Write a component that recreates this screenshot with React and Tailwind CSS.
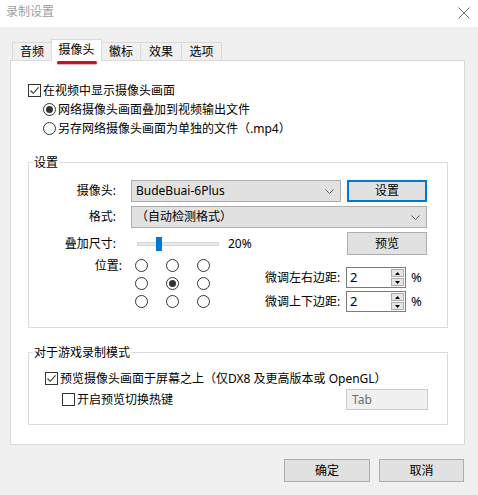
import { useState } from "react";

const font = { fontFamily: '"Noto Sans", "Noto Sans CJK SC", sans-serif' };

const Check = ({ checked }) => (
  <span className="w-[13px] h-[13px] shrink-0 border border-[#333333] bg-white flex items-center justify-center">
    {checked && (
      <svg width="11" height="11" viewBox="0 0 11 11">
        <path d="M1.5 5.5 L4.2 8.3 L9.6 2.4" stroke="#333333" strokeWidth="1.1" fill="none" />
      </svg>
    )}
  </span>
);

const Radio = ({ on }) => (
  <span className="w-[13px] h-[13px] shrink-0 rounded-full border border-[#333333] bg-white flex items-center justify-center">
    {on && <span className="w-[7px] h-[7px] rounded-full bg-[#333333]" />}
  </span>
);

const Chevron = () => (
  <svg width="9" height="5" viewBox="0 0 9 5">
    <path d="M0.5 0.5 L4.5 4.5 L8.5 0.5" stroke="#606060" strokeWidth="1" fill="none" />
  </svg>
);

const Group = ({ label, className, children }) => (
  <div className={"relative border border-[#dcdcdc] " + className}>
    <span className="absolute top-[-8px] left-[4px] bg-white px-[1px] leading-[16px]">{label}</span>
    {children}
  </div>
);

// number field with the little up/down buttons
const Spin = ({ value }) => (
  <div className="w-[60px] h-[21px] border border-[#7a7a7a] bg-white flex items-center">
    <span className="flex-1 pl-[3px] leading-none text-[13px]">{value}</span>
    <div className="w-[15px] h-full flex flex-col gap-px p-px">
      <span className="flex-1 bg-[#e5e5e5] border border-[#acacac] flex items-center justify-center">
        <svg width="5" height="3" viewBox="0 0 5 3"><path d="M0 3 L2.5 0 L5 3 Z" fill="#000" /></svg>
      </span>
      <span className="flex-1 bg-[#e5e5e5] border border-[#acacac] flex items-center justify-center">
        <svg width="5" height="3" viewBox="0 0 5 3"><path d="M0 0 L2.5 3 L5 0 Z" fill="#000" /></svg>
      </span>
    </div>
  </div>
);

const tabs = [
  { name: "音频", w: "w-[40px]" },
  { name: "摄像头", w: "w-[51px]" },
  { name: "徽标", w: "w-[40px]" },
  { name: "效果", w: "w-[42px]" },
  { name: "选项", w: "w-[41px]" },
];

export default function App() {
  const [active] = useState(1);

  return (
    <div className="w-[478px] h-[495px] flex flex-col bg-[#f0f0f0] text-[12px] text-black" style={font}>
      {/* title bar */}
      <div className="h-[27px] shrink-0 bg-white flex items-center justify-between pl-[6px] pr-[8px] pb-[3px]">
        <span className="text-[#a0a0a0] text-[12px]">录制设置</span>
        <svg width="12" height="12" viewBox="0 0 12 12" className="mt-[1px]">
          <path d="M0.5 0.5 L11.5 11.5 M11.5 0.5 L0.5 11.5" stroke="#6b6b6b" strokeWidth="1" />
        </svg>
      </div>

      <div className="pt-[12px] flex flex-col">
        {/* tabs */}
        <div className="ml-[12px] h-[21px] flex items-end">
          {tabs.map((t, i) =>
            i === active ? (
              <div
                key={t.name}
                className={"relative z-10 h-[22px] -mb-px -ml-px bg-white border border-b-0 border-[#d9d9d9] flex items-center justify-center pb-[1px] " + t.w}
              >
                {t.name}
                <span className="absolute left-[5px] top-[21px] w-[40px] h-[3px] rounded-full bg-[#c8141c] shadow-[0_1px_1px_rgba(120,0,0,0.3)]" />
              </div>
            ) : (
              <div
                key={t.name}
                className={"h-[18px] bg-[#f0f0f0] border border-b-0 border-[#d9d9d9] flex items-center justify-center pt-[1px] " + (i > 0 ? "-ml-px " : "") + t.w}
              >
                {t.name}
              </div>
            )
          )}
        </div>

        {/* tab page */}
        <div className="ml-[10px] w-[455px] h-[385px] bg-white border border-[#d9d9d9] pt-[20px] pl-[17px] flex flex-col">
          <div className="h-[19px] flex items-center gap-[2px]">
            <Check checked />
            <span>在视频中显示摄像头画面</span>
          </div>
          <div className="h-[19px] flex items-center gap-[2px] pl-[15px]">
            <Radio on />
            <span>网络摄像头画面叠加到视频输出文件</span>
          </div>
          <div className="h-[19px] flex items-center gap-[2px] pl-[15px]">
            <Radio />
            <span>另存网络摄像头画面为单独的文件（.mp4）</span>
          </div>

          <Group label="设置" className="mt-[24px] w-[420px] h-[166px] pt-[17px] pr-[20px] flex flex-col">
            <div className="h-[22px] flex items-center">
              <span className="w-[87px] text-right">摄像头:</span>
              <div className="ml-[15px] w-[210px] h-[22px] bg-[#e1e1e1] border border-[#adadad] flex items-center justify-between pl-[4px] pr-[6px]">
                <span>BudeBuai-6Plus</span>
                <Chevron />
              </div>
              <button className="ml-auto w-[80px] h-[22px] bg-[#e1e1e1] border-2 border-[#0078d7] flex items-center justify-center">
                设置
              </button>
            </div>

            <div className="mt-[4px] h-[22px] flex items-center">
              <span className="w-[87px] text-right">格式:</span>
              <div className="ml-[15px] flex-1 h-[22px] bg-[#e1e1e1] border border-[#adadad] flex items-center justify-between pl-[4px] pr-[6px]">
                <span>（自动检测格式）</span>
                <Chevron />
              </div>
            </div>

            <div className="mt-[4px] h-[23px] flex items-center">
              <span className="w-[87px] text-right">叠加尺寸:</span>
              <div className="ml-[21px] w-[82px] h-[14px] relative flex items-center">
                <div className="w-full h-[4px] bg-[#e7eaea] border border-[#d6d6d6]" />
                <span className="absolute left-[19px] top-0 w-[6px] h-[14px] bg-[#0078d7]" />
              </div>
              <span className="ml-[9px]">20%</span>
              <button className="ml-auto w-[80px] h-[23px] bg-[#e1e1e1] border border-[#adadad] flex items-center justify-center">
                预览
              </button>
            </div>

            <div className="mt-[4px] flex items-start">
              <span className="w-[93px] text-right leading-[13px]">位置:</span>
              <div className="ml-[13px] grid grid-cols-3 gap-x-[18px] gap-y-[5px]">
                {[0, 1, 2, 3, 4, 5, 6, 7, 8].map((n) => (
                  <Radio key={n} on={n === 4} />
                ))}
              </div>
              <div className="ml-[55px] mt-[8px] flex flex-col gap-[3px]">
                {["微调左右边距:", "微调上下边距:"].map((l) => (
                  <div key={l} className="h-[21px] flex items-center">
                    <span className="w-[81px]">{l}</span>
                    <Spin value="2" />
                    <span className="ml-[5px] text-[13px]">%</span>
                  </div>
                ))}
              </div>
            </div>
          </Group>

          <Group label="对于游戏录制模式" className="mt-[24px] w-[420px] h-[73px] pt-[16px] pl-[16px] pr-[19px] flex flex-col">
            <div className="h-[19px] flex items-center gap-[2px]">
              <Check checked />
              <span>预览摄像头画面于屏幕之上（仅DX8 及更高版本或 OpenGL）</span>
            </div>
            <div className="mt-[1px] h-[21px] flex items-center gap-[2px] pl-[17px]">
              <Check />
              <span>开启预览切换热键</span>
              <div className="ml-auto w-[82px] h-[21px] bg-[#f0f0f0] border border-[#cccccc] flex items-center pl-[5px] text-[#6d6d6d]">
                Tab
              </div>
            </div>
          </Group>
        </div>

        {/* dialog buttons */}
        <div className="mt-[14px] flex justify-end gap-[9px] pr-[14px]">
          <button className="w-[86px] h-[23px] bg-[#e1e1e1] border border-[#adadad]">确定</button>
          <button className="w-[85px] h-[23px] bg-[#e1e1e1] border border-[#adadad]">取消</button>
        </div>
      </div>
    </div>
  );
}
